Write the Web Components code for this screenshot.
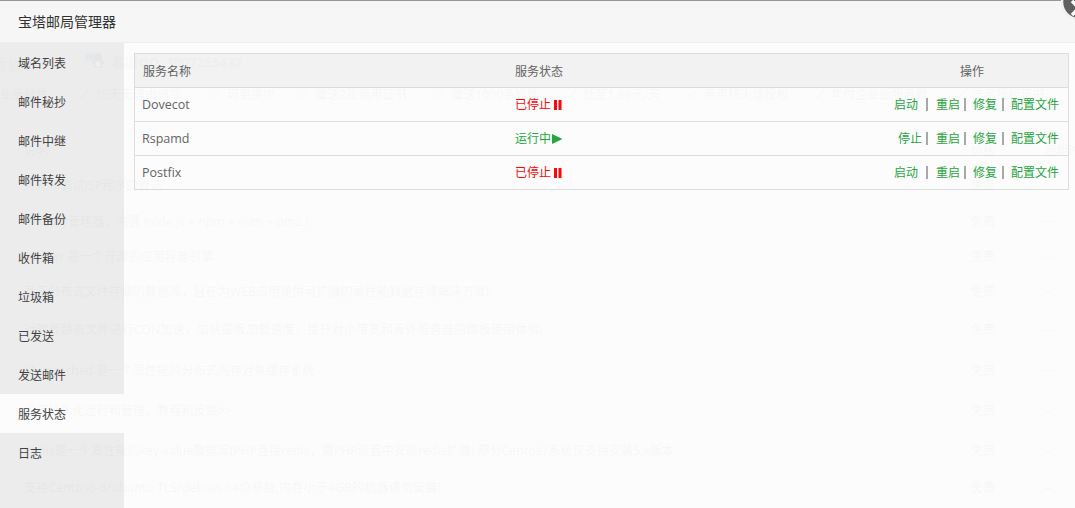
<!DOCTYPE html>
<html lang="zh">
<head>
<meta charset="utf-8">
<title>宝塔邮局管理器</title>
<style>
	html, body { margin: 0; height: 100%; overflow: hidden; background: #b3b3b3; }
	body { font: 12px "Open Sans", "Noto Sans CJK SC", sans-serif; color: #333; }
</style>
</head>
<body>

<ghost-page>
	<span slot="qq">客服QQ: 3007255432</span>
	<ghost-feature slot="features" style="--x:0px">业版特性</ghost-feature>
	<ghost-feature slot="features" style="--x:78px" check>15天无理由退款</ghost-feature>
	<ghost-feature slot="features" style="--x:210px" check>可更换IP</ghost-feature>
	<ghost-feature slot="features" style="--x:298px" check>赠送2张商用证书</ghost-feature>
	<ghost-feature slot="features" style="--x:434px" check>赠送1000条短信</ghost-feature>
	<ghost-feature slot="features" style="--x:566px" check>低至1.86元/天</ghost-feature>
	<ghost-feature slot="features" style="--x:687px" check>商用防火墙授权</ghost-feature>
	<ghost-feature slot="features" style="--x:814px" check>年付企业版服务群</ghost-feature>
	<ghost-feature slot="features" style="--x:955px" check>产品授权证书</ghost-feature>

	<ghost-row style="--h:34px" price="价格" expire="到期时间">说明</ghost-row>
	<ghost-row style="--h:35px">开发和调试JSP程序的首选</ghost-row>
	<ghost-row style="--h:37px">PMEasy管理器，内置 node.js + npm + nvm + pm2.!</ghost-row>
	<ghost-row style="--h:34px">Docker 是一个开源的应用容器引擎</ghost-row>
	<ghost-row style="--h:36px">基于分布式文件存储的数据库，旨在为WEB应用提供可扩展的高性能数据存储解决方案!</ghost-row>
	<ghost-row style="--h:40px;letter-spacing:.25px">对面板静态文件进行CDN加速，加快面板加载速度，提升对小带宽和海外服务器的面板使用体验!</ghost-row>
	<ghost-row style="--h:41px">Memcached 是一个高性能的分布式内存对象缓存系统</ghost-row>
	<ghost-row style="--h:40px">应用持久化运行和管理。教程和反馈&gt;&gt;</ghost-row>
	<ghost-row style="--h:40px">Redis是一个高性能的key-value数据库(PHP连接redis，需PHP设置中安装redis扩展) 部分Centos7系统仅支持安装5.x版本</ghost-row>
	<ghost-row style="--h:34px;letter-spacing:.22px">支持Centos6-8/ubuntu TLS/debian 64位系统,内存小于4GB的机器请勿安装!</ghost-row>
</ghost-page>

<mail-dialog heading="宝塔邮局管理器">
	<side-item slot="menu">域名列表</side-item>
	<side-item slot="menu">邮件秘抄</side-item>
	<side-item slot="menu">邮件中继</side-item>
	<side-item slot="menu">邮件转发</side-item>
	<side-item slot="menu">邮件备份</side-item>
	<side-item slot="menu">收件箱</side-item>
	<side-item slot="menu">垃圾箱</side-item>
	<side-item slot="menu">已发送</side-item>
	<side-item slot="menu">发送邮件</side-item>
	<side-item slot="menu" active>服务状态</side-item>
	<side-item slot="menu">日志</side-item>

	<service-table>
		<service-row name="Dovecot" state="stopped"></service-row>
		<service-row name="Rspamd" state="running"></service-row>
		<service-row name="Postfix" state="stopped"></service-row>
	</service-table>
</mail-dialog>

<script>
const html = String.raw

/**
 * the page behind the dialog, only faintly visible through it
 */
class GhostPage extends HTMLElement {
	constructor() {
		super()
		this.attachShadow({ mode: 'open' }).innerHTML = html`
			<style>
				:host {
					position: absolute;
					inset: 0;
					display: block;
					color: #3c3c3c;
					font-size: 12px;
					letter-spacing: .12px;
					overflow: hidden;
				}
				.contact {
					height: 36px;
					padding-top: 43px;
					display: flex;
					align-items: center;
					gap: 6px;
					font-size: 13px;
					font-weight: 700;
					color: #5a6a5e;
				}
				.contact svg { margin-left: 85px; }
				.contact b { position: absolute; left: -6px; top: 53px; font-size: 14px; font-weight: 400; }
				.features { position: relative; height: 32px; margin-top: -1px; }
				.rows { margin-top: 23px; }
			</style>
			<div class="contact">
				<b>版优惠</b>
				<svg width="21" height="18" viewBox="0 0 21 18">
					<ellipse cx="5" cy="5" rx="5" ry="4" fill="#0a5a9f"/>
					<path d="M13 1c3 0 4 3 4 6l2 5-2 0c0 2 1 3-1 4h-6c-2-1-1-2-1-4l-2 0 2-5c0-3 1-6 4-6z" fill="#222"/>
					<path d="M10.500 9c2 1 3 1 5 0l.5 5-3 1.500-3-1.500z" fill="#eee"/>
				</svg>
				<slot name="qq"></slot>
			</div>
			<div class="features"><slot name="features"></slot></div>
			<div class="rows"><slot></slot></div>
		`
	}
}

customElements.define('ghost-page', GhostPage)


class GhostFeature extends HTMLElement {
	constructor() {
		super()
		this.attachShadow({ mode: 'open' }).innerHTML = html`
			<style>
				:host {
					position: absolute;
					left: var(--x);
					top: 0;
					display: flex;
					align-items: center;
					gap: 6px;
					height: 32px;
					white-space: nowrap;
				}
				svg { display: none; }
				:host([check]) svg { display: block; }
			</style>
			<svg width="11" height="10" viewBox="0 0 11 10"><path d="M.5 5.500l3 3.500L10.500.5" fill="none" stroke="#2a5a35" stroke-width="1"/></svg>
			<slot></slot>
		`
	}
}

customElements.define('ghost-feature', GhostFeature)


class GhostRow extends HTMLElement {
	constructor() {
		super()
		const price = this.getAttribute('price') || '免费'
		const expire = this.getAttribute('expire') || '--'
		this.attachShadow({ mode: 'open' }).innerHTML = html`
			<style>
				:host {
					display: grid;
					grid-template-columns: 947px 73px 1fr;
					align-items: center;
					height: var(--h);
					padding-left: 24px;
					white-space: nowrap;
				}
			</style>
			<div><slot></slot></div>
			<div>${price}</div>
			<div>${expire}</div>
		`
	}
}

customElements.define('ghost-row', GhostRow)


class MailDialog extends HTMLElement {
	constructor() {
		super()
		this.attachShadow({ mode: 'open' }).innerHTML = html`
			<style>
				:host {
					position: absolute;
					inset: 0;
					display: flex;
					flex-direction: column;
					opacity: .96;
					background: #fff;
					border-top: 1px solid #969696;
					box-sizing: border-box;
				}
				header {
					height: 42px;
					flex: none;
					box-sizing: border-box;
					padding: 0 0 1px 18px;
					display: flex;
					align-items: center;
					background: #f9f9f9;
					border-bottom: 1px solid #f1f1f1;
					font-size: 14px;
					color: #2b2b2b;
				}
				.body { flex: 1; display: flex; min-height: 0; }
				nav { width: 124px; flex: none; background: #efefef; }
				main { flex: 1; padding: 10px 6px 0 10px; }
				.close {
					position: absolute;
					top: -17px;
					right: -22px;
				}
			</style>
			<header></header>
			<div class="body">
				<nav><slot name="menu"></slot></nav>
				<main><slot></slot></main>
			</div>
			<svg class="close" width="36" height="36" viewBox="0 0 36 36">
				<circle cx="18" cy="18" r="17" fill="#5c5c5c" stroke="#f4f4f4" stroke-width="2.500"/>
				<path d="M11 17l14 14M25 17L11 31" stroke="#fff" stroke-width="3.500"/>
			</svg>
		`
		this.shadowRoot.querySelector('header').textContent = this.getAttribute('heading')
	}
}

customElements.define('mail-dialog', MailDialog)


class SideItem extends HTMLElement {
	constructor() {
		super()
		this.attachShadow({ mode: 'open' }).innerHTML = html`
			<style>
				:host {
					display: flex;
					align-items: center;
					height: 39px;
					padding-left: 18px;
					font-size: 12px;
					color: #3c3c3c;
				}
				:host([active]) { background: #fff; }
			</style>
			<slot></slot>
		`
	}
}

customElements.define('side-item', SideItem)


class ServiceTable extends HTMLElement {
	constructor() {
		super()
		this.attachShadow({ mode: 'open' }).innerHTML = html`
			<style>
				:host {
					display: block;
					border: 1px solid #dfdfdf;
					border-bottom: 0;
					color: #606060;
					--cols: 372px 1fr auto;
				}
				.head {
					display: grid;
					grid-template-columns: var(--cols);
					align-items: center;
					height: 33px;
					background: #f5f5f5;
					border-bottom: 1px solid #dfdfdf;
				}
				.head div { padding-left: 8px; }
				.head div:last-child { padding: 0 84px 0 0; }
			</style>
			<div class="head">
				<div>服务名称</div>
				<div>服务状态</div>
				<div>操作</div>
			</div>
			<slot></slot>
		`
	}
}

customElements.define('service-table', ServiceTable)


class ServiceRow extends HTMLElement {
	constructor() {
		super()
		const running = this.getAttribute('state') == 'running'
		const state = running
			? html`<span class="on">运行中<svg width="11" height="10" viewBox="0 0 11 10"><path d="M0 0l10.500 5L0 10z" fill="#20a53a"/></svg></span>`
			: html`<span class="off">已停止<svg class="pause" width="8" height="10" viewBox="0 0 8 10"><path d="M0 0h3v10H0zM4.500 0h3v10h-3z" fill="#f00"/></svg></span>`
		const first = running
			? html`<a>停止</a><i></i>`
			: html`<a>启动</a><i class="wide"></i>`

		this.attachShadow({ mode: 'open' }).innerHTML = html`
			<style>
				:host {
					display: grid;
					grid-template-columns: var(--cols);
					align-items: center;
					height: 33px;
					border-bottom: 1px solid #dfdfdf;
				}
				.name { padding: 0 0 1px 7px; font-size: 12.500px; color: #606060; }
				.state { padding: 0 0 1px 8px; }
				.off { color: #f00; }
				.on { color: #20a53a; }
				svg { margin-left: 1px; vertical-align: -1px; }
				svg.pause { margin-left: 3px; }
				.ops { display: flex; align-items: center; padding: 0 9px 1px 0; }
				a { color: #20a53a; }
				i { width: 14px; height: 14px; position: relative; }
				i::after {
					content: "";
					position: absolute;
					left: 4px;
					top: 1px;
					width: 2px;
					height: 13px;
					background: #a8a8a8;
				}
				i.wide { width: 18px; }
				i.wide::after { left: 8px; }
				i.narrow { width: 13px; }
				i.last::after { left: 5px; }
			</style>
			<div class="name"></div>
			<div class="state">${state}</div>
			<div class="ops">
				${first}<a>重启</a><i class="narrow"></i><a>修复</a><i class="last"></i><a>配置文件</a>
			</div>
		`
		this.shadowRoot.querySelector('.name').textContent = this.getAttribute('name')
	}
}

customElements.define('service-row', ServiceRow)
</script>
</body>
</html>
